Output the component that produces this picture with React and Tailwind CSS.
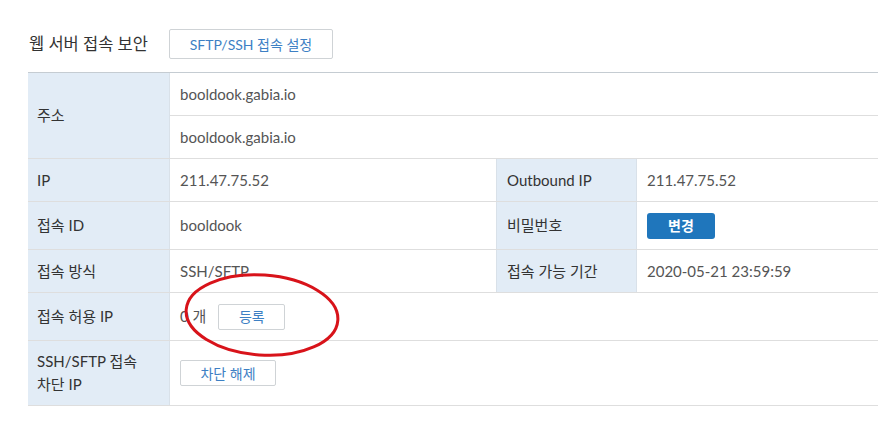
const font = { fontFamily: "Lato, 'Noto Sans CJK KR', sans-serif" };

const Th = ({ children, className = "" }) => (
  <div className={`flex items-center pl-[9px] bg-[#e2ecf6] text-[15px] text-[#333] ${className}`}>
    {children}
  </div>
);

const Td = ({ children, className = "" }) => (
  <div className={`flex items-center pl-[10px] text-[15px] text-[#555] ${className}`}>{children}</div>
);

const OutlineBtn = ({ children, className = "" }) => (
  <button className={`h-[26px] border border-[#cfd3d6] rounded-[2px] bg-white text-[14px] text-[#3d80c4] ${className}`}>
    {children}
  </button>
);

export default function App() {
  return (
    <div className="relative min-h-[421px] w-[878px] bg-white pt-[29px] pl-[28px] overflow-hidden" style={font}>
      <div className="flex items-center h-[30px]">
        <h2 className="text-[16.5px] text-[#333] pl-[1px] w-[141px]">웹 서버 접속 보안</h2>
        <button className="h-[30px] w-[164px] border border-[#cfd3d6] rounded-[2px] bg-white text-[14px] text-[#3d80c4]">
          SFTP/SSH 접속 설정
        </button>
      </div>

      <div className="mt-[13px] w-[850px] border-t border-[#c5ccd2]">
        {/* 주소 */}
        <div className="flex h-[86px] border-b border-[#dedede]">
          <Th className="w-[142px] border-r border-[#d9e1e9]">주소</Th>
          <div className="flex-1 flex flex-col">
            <Td className="h-[43px] border-b border-[#dedede]">booldook.gabia.io</Td>
            <Td className="h-[42px]">booldook.gabia.io</Td>
          </div>
        </div>

        {/* IP */}
        <div className="flex h-[43px] border-b border-[#dedede]">
          <Th className="w-[142px] border-r border-[#d9e1e9]">IP</Th>
          <Td className="w-[326px]">211.47.75.52</Td>
          <Th className="w-[141px] border-x border-[#d9e1e9] pl-[10px]">Outbound IP</Th>
          <Td className="flex-1">211.47.75.52</Td>
        </div>

        {/* 접속 ID */}
        <div className="flex h-[48px] border-b border-[#dedede]">
          <Th className="w-[142px] border-r border-[#d9e1e9]">접속 ID</Th>
          <Td className="w-[326px]">booldook</Td>
          <Th className="w-[141px] border-x border-[#d9e1e9] pl-[10px]">비밀번호</Th>
          <Td className="flex-1">
            <button className="h-[26px] w-[68px] rounded-[3px] bg-[#1f76bc] text-[14px] font-bold text-white">변경</button>
          </Td>
        </div>

        {/* 접속 방식 */}
        <div className="flex h-[43px] border-b border-[#dedede]">
          <Th className="w-[142px] border-r border-[#d9e1e9]">접속 방식</Th>
          <Td className="w-[326px]">SSH/SFTP</Td>
          <Th className="w-[141px] border-x border-[#d9e1e9] pl-[10px]">접속 가능 기간</Th>
          <Td className="flex-1">2020-05-21 23:59:59</Td>
        </div>

        {/* 접속 허용 IP */}
        <div className="flex h-[48px] border-b border-[#dedede]">
          <Th className="w-[142px] border-r border-[#d9e1e9]">접속 허용 IP</Th>
          <Td className="flex-1 gap-[12px]">
            <span>0 개</span>
            <OutlineBtn className="w-[67px]">등록</OutlineBtn>
          </Td>
        </div>

        {/* 차단 IP */}
        <div className="flex h-[65px] border-b border-[#dedede]">
          <Th className="w-[142px] border-r border-[#d9e1e9] leading-[23px]">
            <span>
              SSH/SFTP 접속
              <br />
              차단 IP
            </span>
          </Th>
          <Td className="flex-1">
            <OutlineBtn className="w-[96px]">차단 해제</OutlineBtn>
          </Td>
        </div>
      </div>

      {/* annotation */}
      <svg className="absolute left-[180px] top-[270px] pointer-events-none" width="165" height="92" viewBox="0 0 165 92">
        <ellipse cx="82" cy="45" rx="76" ry="40" fill="none" stroke="#d8131a" strokeWidth="3" transform="rotate(4 82 45)" />
      </svg>
    </div>
  );
}
